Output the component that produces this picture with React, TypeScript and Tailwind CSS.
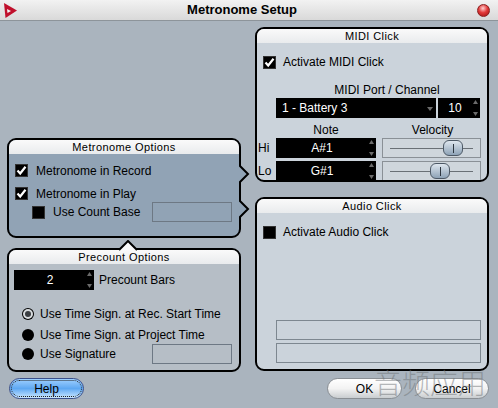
import React from "react";

const FONT = { fontFamily: '"Liberation Sans", Arial, sans-serif' };

function Check({ on }: { on?: boolean }) {
  return (
    <span className="w-[13px] h-[13px] bg-black border border-[#333] flex items-center justify-center shrink-0">
      {on && (
        <svg width="11" height="11" viewBox="0 0 11 11">
          <path d="M1.5 5.5 L4.2 8.5 L9.5 1.8" stroke="white" strokeWidth="2.2" fill="none" />
        </svg>
      )}
    </span>
  );
}

function Radio({ on }: { on?: boolean }) {
  return (
    <span className="w-[12px] h-[12px] rounded-full bg-black flex items-center justify-center shrink-0">
      {on && <span className="w-[10px] h-[10px] rounded-full border-2 border-[#d8dcdf] bg-[#3a3e42]" />}
    </span>
  );
}

function Spin({ value, w, center = true }: { value: string; w: string; center?: boolean }) {
  return (
    <div className={`${w} h-[20px] bg-black text-white text-[12px] flex items-center relative`}>
      <span className={center ? "flex-1 text-center pr-[8px]" : "flex-1 pl-[6px]"}>{value}</span>
      <span className="absolute right-[2px] top-[2px] bottom-[2px] flex flex-col justify-between">
        <svg width="5" height="4" viewBox="0 0 5 4"><path d="M0 4 L2.5 0 L5 4Z" fill="#6b6b6b" /></svg>
        <svg width="5" height="4" viewBox="0 0 5 4"><path d="M0 0 L2.5 4 L5 0Z" fill="#6b6b6b" /></svg>
      </span>
    </div>
  );
}

function Slider({ pos }: { pos: number }) {
  return (
    <div className="w-[99px] h-[20px] border border-[#8a9096] bg-[#cfd6dc] relative flex items-center px-[7px]">
      <div className="h-px w-full bg-[#6a7076]" />
      <div
        className="absolute top-[1px] w-[20px] h-[16px] rounded-[6px] border border-[#4d5966] bg-gradient-to-b from-[#dfe7ef] to-[#8ea3b7] flex items-center justify-center"
        style={{ left: pos }}
      >
        <div className="w-px h-[9px] bg-[#2d3640]" />
      </div>
    </div>
  );
}

function Panel({
  title,
  body,
  className,
  children,
}: {
  title: string;
  body: string;
  className: string;
  children: React.ReactNode;
}) {
  return (
    <div className={`rounded-[9px] border-2 border-black overflow-hidden flex flex-col ${body} ${className}`}>
      <div className="h-[14px] bg-gradient-to-b from-[#fafafa] to-[#e9ebed] text-[11px] leading-[14px] text-center tracking-[0.4px] text-black">
        {title}
      </div>
      <div className="flex-1 relative">{children}</div>
    </div>
  );
}

export default function App() {
  return (
    <div className="w-[498px] h-[408px] bg-[#aab4be] relative overflow-hidden text-black select-none" style={FONT}>
      {/* title bar */}
      <div className="h-[21px] bg-gradient-to-b from-[#f2f2f2] to-[#d9d9d9] border-b border-[#8d949a] flex items-center relative">
        <svg className="ml-[4px]" width="13" height="15" viewBox="0 0 13 15">
          <path d="M0 0 L13 7.5 L1.5 15 Z" fill="#c0102c" />
          <path d="M3 6 L7 8 L3.5 10 Z" fill="#f4f4f4" />
        </svg>
        <div className="flex-1 text-center text-[13px] font-bold -ml-[10px]">Metronome Setup</div>
        <div className="w-[13px] h-[13px] rounded-full mr-[8px] border border-[#8a2020] bg-[radial-gradient(circle_at_45%_30%,#ffd0d0,#e23a3a_45%,#a01010)]" />
      </div>

      <div className="flex pl-[7px] pr-[9px] gap-[14px]">
        {/* left column */}
        <div className="w-[234px] flex flex-col pt-[117px] gap-[10px]">
          <div className="relative">
            <Panel title="Metronome Options" body="bg-[#91a3b5]" className="h-[100px]">
              <div className="flex flex-col text-[12px] pl-[6px] pt-[10px]">
                <div className="flex items-center gap-[8px] h-[13px]">
                  <Check on />
                  <span>Metronome in Record</span>
                </div>
                <div className="flex items-center gap-[8px] h-[13px] mt-[10px]">
                  <Check on />
                  <span>Metronome in Play</span>
                </div>
                <div className="flex items-center h-[20px] mt-[2px] pl-[17px]">
                  <Check />
                  <span className="ml-[8px]">Use Count Base</span>
                  <div className="ml-auto mr-[7px] w-[80px] h-[20px] border border-[#6d7884]" />
                </div>
              </div>
            </Panel>
            <svg className="absolute right-[-9px] top-[27px]" width="11" height="18" viewBox="0 0 11 18">
              <path d="M0 0 L9 9 L0 18" fill="#91a3b5" stroke="black" strokeWidth="2" />
            </svg>
            <svg className="absolute right-[-9px] top-[62px]" width="11" height="18" viewBox="0 0 11 18">
              <path d="M0 0 L9 9 L0 18" fill="#91a3b5" stroke="black" strokeWidth="2" />
            </svg>
          </div>

          <div className="relative">
            <Panel title="Precount Options" body="bg-[#b6bec6]" className="h-[124px]">
              <div className="flex flex-col text-[12px] pt-[6px] pl-[5px]">
                <div className="flex items-center gap-[5px]">
                  <Spin value="2" w="w-[80px]" />
                  <span>Precount Bars</span>
                </div>
                <div className="flex items-center gap-[6px] mt-[17px] pl-[8px] h-[14px]">
                  <Radio on />
                  <span>Use Time Sign. at Rec. Start Time</span>
                </div>
                <div className="flex items-center gap-[6px] mt-[7px] pl-[8px] h-[14px]">
                  <Radio />
                  <span>Use Time Sign. at Project Time</span>
                </div>
                <div className="flex items-center gap-[6px] mt-[2px] pl-[8px] h-[20px]">
                  <Radio />
                  <span>Use Signature</span>
                  <div className="ml-auto mr-[7px] w-[80px] h-[20px] border border-[#6d7884]" />
                </div>
              </div>
            </Panel>
            <svg className="absolute left-[112px] top-[-8px]" width="18" height="11" viewBox="0 0 18 11">
              <path d="M0 10 L9 1 L18 10" fill="#fafafa" stroke="black" strokeWidth="2" />
            </svg>
          </div>
        </div>

        {/* right column */}
        <div className="w-[234px] flex flex-col pt-[6px] gap-[15px]">
          <Panel title="MIDI Click" body="bg-[#cbd3db]" className="h-[155px]">
            <div className="flex flex-col text-[12px]">
              <div className="flex items-center gap-[7px] pl-[6px] mt-[10px]">
                <Check on />
                <span>Activate MIDI Click</span>
              </div>
              <div className="text-center pl-[30px] mt-[12px] leading-[14px]">MIDI Port / Channel</div>
              <div className="flex gap-[2px] pl-[19px] mt-[1px]">
                <div className="w-[160px] h-[20px] bg-black text-white flex items-center pl-[6px] relative">
                  1 - Battery 3
                  <svg className="absolute right-[3px] top-[9px]" width="6" height="4" viewBox="0 0 6 4">
                    <path d="M0 0 L3 4 L6 0Z" fill="#6b6b6b" />
                  </svg>
                </div>
                <Spin value="10" w="w-[42px]" />
              </div>
              <div className="flex pl-[19px] mt-[5px] leading-[14px]">
                <span className="w-[100px] text-center">Note</span>
                <span className="w-[105px] text-center pl-[8px]">Velocity</span>
              </div>
              <div className="flex items-center mt-[1px]">
                <span className="w-[19px] pl-[1px]">Hi</span>
                <Spin value="A#1" w="w-[100px]" />
                <div className="ml-[6px]"><Slider pos={60} /></div>
              </div>
              <div className="flex items-center mt-[3px]">
                <span className="w-[19px] pl-[1px]">Lo</span>
                <Spin value="G#1" w="w-[100px]" />
                <div className="ml-[6px]"><Slider pos={47} /></div>
              </div>
            </div>
          </Panel>

          <Panel title="Audio Click" body="bg-[#cbd3db]" className="h-[174px]">
            <div className="flex flex-col text-[12px] h-full pb-[6px]">
              <div className="flex items-center gap-[7px] pl-[6px] mt-[10px]">
                <Check />
                <span>Activate Audio Click</span>
              </div>
              <div className="mt-auto flex flex-col gap-[3px] pl-[19px]">
                <div className="w-[205px] h-[20px] border border-[#7d8790]" />
                <div className="w-[205px] h-[20px] border border-[#7d8790]" />
              </div>
            </div>
          </Panel>
        </div>
      </div>

      {/* buttons */}
      <div className="flex items-center mt-[6px] px-[9px] text-[12px]">
        <div className="w-[75px] h-[21px] rounded-full border border-[#3a4f8a] bg-gradient-to-b from-[#9fd0ff] via-[#5ea8f2] to-[#c9e6ff] p-[1px]">
          <div className="w-full h-full rounded-full border border-dotted border-[#222] flex items-center justify-center">Help</div>
        </div>
        <div className="ml-auto w-[75px] h-[21px] rounded-full border border-[#8a8f94] bg-gradient-to-b from-[#ffffff] via-[#f3f3f3] to-[#c9cdd0] flex items-center justify-center">
          OK
        </div>
        <div className="ml-[13px] w-[74px] h-[21px] rounded-full border border-[#8a8f94] bg-gradient-to-b from-[#ffffff] via-[#f3f3f3] to-[#c9cdd0] flex items-center justify-center">
          Cancel
        </div>
      </div>

      {/* watermark */}
      <div
        className="absolute left-[374px] top-[368px] text-[28px] leading-none whitespace-nowrap text-[#6f7478]/50 pointer-events-none"
        style={{ fontFamily: '"Noto Sans CJK SC", sans-serif', fontWeight: 200 }}
      >
        音频应用
      </div>
    </div>
  );
}
